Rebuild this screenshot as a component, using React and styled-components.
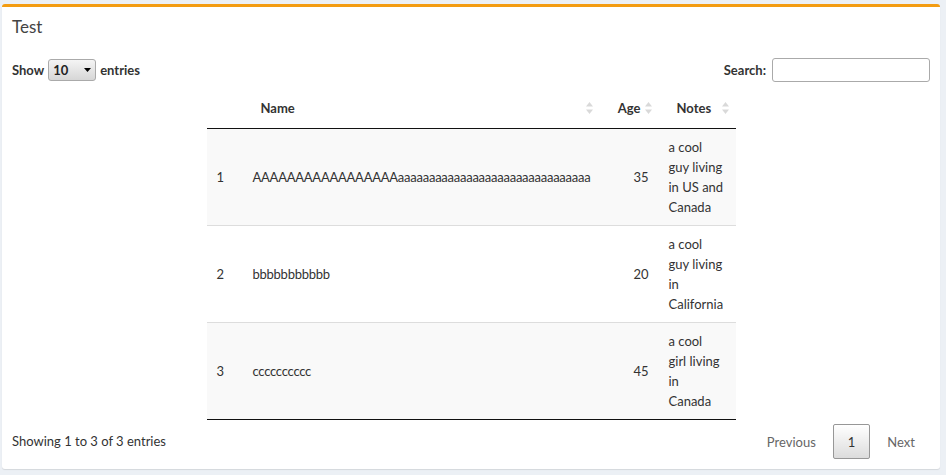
import React from 'react';
import styled, { createGlobalStyle } from 'styled-components';

const GlobalStyle = createGlobalStyle`
    body {
        margin: 0;
        background: #ecf0f5;
        font-family: Lato, "Liberation Sans", sans-serif;
        font-size: 13px;
        line-height: 20px;
        color: #333;
    }
`

// notes keep the line breaks that the original column width gave them
const rows = [
    { id: 1, name: 'AAAAAAAAAAAAAAAAA' + 'a'.repeat(31), age: 35, notes: 'a cool\nguy living\nin US and\nCanada' },
    { id: 2, name: 'bbbbbbbbbbb', age: 20, notes: 'a cool\nguy living\nin\nCalifornia' },
    { id: 3, name: 'cccccccccc', age: 45, notes: 'a cool\ngirl living\nin\nCanada' },
];

const SortIcon = () => (
    <SortMark width="9" height="14" viewBox="0 0 9 14">
        <path d="M4.5 1 L8 5.5 L1 5.5 Z" fill="#d9d9d9" />
        <path d="M4.5 13 L8 8.5 L1 8.5 Z" fill="#d9d9d9" />
    </SortMark>
)

const App = () => {
    return (
        <Page>
            <GlobalStyle />
            <Box>
                <BoxHeader>
                    <Title>Test</Title>
                </BoxHeader>
                <BoxBody>
                    <Controls>
                        <Label>
                            Show
                            <FakeSelect>
                                10
                                <svg width="7" height="4" viewBox="0 0 7 4">
                                    <path d="M0 0 L7 0 L3.5 4 Z" fill="#000" />
                                </svg>
                            </FakeSelect>
                            entries
                        </Label>
                        <Label>
                            Search:
                            <SearchInput type="search" />
                        </Label>
                    </Controls>

                    <Table>
                        <colgroup>
                            <col style={{ width: 36 }} />
                            <col style={{ width: 357 }} />
                            <col style={{ width: 59 }} />
                            <col style={{ width: 77 }} />
                        </colgroup>
                        <thead>
                            <tr>
                                <Th></Th>
                                <Th>Name<SortIcon /></Th>
                                <Th $right>Age<SortIcon /></Th>
                                <Th>Notes<SortIcon /></Th>
                            </tr>
                        </thead>
                        <tbody>
                            {rows.map((r, i) => (
                                <Row key={r.id} $odd={i % 2 === 0} $first={i === 0}>
                                    <Td>{r.id}</Td>
                                    <NameTd>{r.name}</NameTd>
                                    <Td $right>{r.age}</Td>
                                    <NotesTd>{r.notes}</NotesTd>
                                </Row>
                            ))}
                        </tbody>
                    </Table>

                    <Footer>
                        <Info>Showing 1 to 3 of 3 entries</Info>
                        <Paging>
                            <PageButton>Previous</PageButton>
                            <PageButton $current>1</PageButton>
                            <PageButton>Next</PageButton>
                        </Paging>
                    </Footer>
                </BoxBody>
            </Box>
        </Page>
    )
}

const Page = styled.div`
    padding: 4px 6px 5px 2px;
`

const Box = styled.div`
    background: #fff;
    border-top: 3px solid #f39c12;
    border-radius: 3px;
    box-shadow: 0 1px 1px rgba(0, 0, 0, 0.1);
`

const BoxHeader = styled.div`
    padding: 10px;
`

const Title = styled.h3`
    margin: 0;
    font-size: 17px;
    font-weight: 400;
    line-height: 20px;
    color: #444;
`

const BoxBody = styled.div`
    padding: 10px;
`

const Controls = styled.div`
    display: flex;
    justify-content: space-between;
    align-items: center;
    margin-top: 1px;
    height: 24px;
`

const Label = styled.label`
    display: flex;
    align-items: center;
    gap: 4px;
    font-weight: 700;
`

const FakeSelect = styled.span`
    display: flex;
    align-items: center;
    justify-content: space-between;
    box-sizing: border-box;
    width: 48px;
    height: 22px;
    padding: 0 4px 0 4px;
    border: 1px solid #aaa;
    border-radius: 3px;
    background: linear-gradient(#f4f4f4, #d6d6d6);
    font-size: 13px;
    font-weight: 700;
    color: #222;
`

const SearchInput = styled.input`
    box-sizing: border-box;
    width: 158px;
    height: 24px;
    margin-left: 2px;
    padding: 5px;
    border: 1px solid #aaa;
    border-radius: 3px;
    background: transparent;
    outline: none;
`

const Table = styled.table`
    width: 529px;
    margin: 6px auto 0;
    table-layout: fixed;
    border-collapse: collapse;
    border-bottom: 1px solid #111;
`

const Th = styled.th`
    position: relative;
    height: 20px;
    padding: 10px 18px;
    text-align: ${p => (p.$right ? 'right' : 'left')};
    font-weight: 700;
    border-bottom: 1px solid #111;
`

const SortMark = styled.svg`
    position: absolute;
    right: 6px;
    top: 13px;
`

const Row = styled.tr`
    background: ${p => (p.$odd ? '#f9f9f9' : '#fff')};
    border-top: ${p => (p.$first ? 'none' : '1px solid #ddd')};
`

const Td = styled.td`
    padding: 8px 10px;
    vertical-align: middle;
    text-align: ${p => (p.$right ? 'right' : 'left')};
`

const NameTd = styled(Td)`
    letter-spacing: -0.25px;
    white-space: nowrap;
`

const NotesTd = styled(Td)`
    white-space: pre-line;
`

const Footer = styled.div`
    display: flex;
    justify-content: space-between;
    align-items: flex-start;
`

const Info = styled.div`
    padding-top: 11px;
`

const Paging = styled.div`
    display: flex;
    padding-top: 4px;
`

const PageButton = styled.span`
    box-sizing: border-box;
    height: 35px;
    margin-left: 2px;
    padding: 7px 14px;
    border: 1px solid ${p => (p.$current ? '#979797' : 'transparent')};
    border-radius: 2px;
    background: ${p => (p.$current ? 'linear-gradient(#fff, #dcdcdc)' : 'transparent')};
    color: ${p => (p.$current ? '#333' : '#666')};
`

export default App;
